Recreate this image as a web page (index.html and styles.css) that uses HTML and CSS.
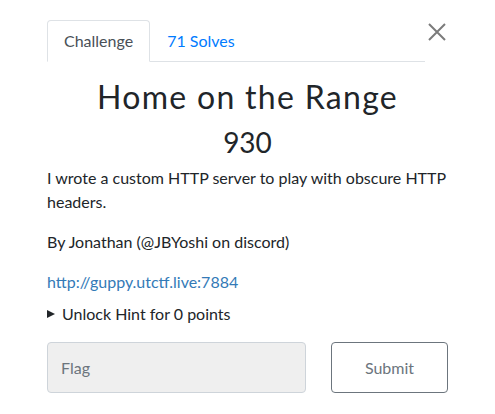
FILE: index.html
```html
<!DOCTYPE html>
<html>
<head>
<meta charset="utf-8">
<link rel="stylesheet" href="styles.css">
</head>
<body>
<div class="modal">
  <div class="header">
    <nav class="tabs">
      <span class="tab active">Challenge</span>
      <span class="tab link">71 Solves</span>
    </nav>
    <button class="close" aria-label="Close">
      <svg width="18" height="18" viewBox="0 0 18 18"><path d="M1 1 L17 17 M17 1 L1 17" stroke="#7b7b7b" stroke-width="2" fill="none"/></svg>
    </button>
  </div>
  <h2 class="title">Home on the Range</h2>
  <h3 class="points">930</h3>
  <div class="desc">
    <p>I wrote a custom HTTP server to play with obscure HTTP headers.</p>
    <p>By Jonathan (@JBYoshi on discord)</p>
    <p><a class="url" href="#">http://guppy.utctf.live:7884</a></p>
  </div>
  <div class="hint"><span class="tri"></span>Unlock Hint for 0 points</div>
  <div class="submit-row">
    <div class="flag">Flag</div>
    <div class="btn">Submit</div>
  </div>
</div>
</body>
</html>
```
FILE: styles.css
```css
* { box-sizing: border-box; }
body {
  margin: 0;
  background: #fff;
  font-family: Lato, "Noto Sans", sans-serif;
  color: #212529;
  font-size: 16px;
  line-height: 24px;
}
.modal {
  width: 495px;
  padding: 20px 47px 0 47px;
}
.header {
  display: flex;
  align-items: flex-start;
}
.tabs {
  width: 378px;
  display: flex;
  border-bottom: 1px solid #dee2e6;
}
.tab {
  padding: 8px 16px;
  margin-bottom: -1px;
  border: 1px solid transparent;
  border-radius: 4px 4px 0 0;
}
.tab.active {
  color: #495057;
  background: #fff;
  border-color: #dee2e6 #dee2e6 #fff;
}
.tab.link {
  color: #007bff;
}
.close {
  margin: 3px 0 0 3px;
  padding: 0;
  border: 0;
  background: none;
  width: 18px;
  height: 18px;
  display: flex;
}
.title {
  margin: 16px 0 0 0;
  text-align: center;
  font-size: 32px;
  line-height: 38px;
  font-weight: 400;
  letter-spacing: 1.3px;
  color: #212529;
}
.points {
  margin: 9px 0 0 0;
  text-align: center;
  font-size: 28px;
  line-height: 34px;
  font-weight: 400;
  color: #212529;
}
.desc {
  margin-top: 7px;
}
.desc p {
  margin: 0 0 16px 0;
}
.desc p:last-child {
  margin-bottom: 8px;
}
.url {
  color: #337ab7;
  text-decoration: none;
}
.hint {
  display: flex;
  align-items: center;
}
.tri {
  width: 0;
  height: 0;
  border-left: 8px solid #212529;
  border-top: 4px solid transparent;
  border-bottom: 4px solid transparent;
  margin-right: 7px;
}
.submit-row {
  display: flex;
  gap: 25px;
  margin-top: 16px;
}
.flag {
  flex: 1;
  height: 51px;
  background: #efefef;
  border: 1px solid #ced4da;
  border-radius: 4px;
  color: #6c757d;
  padding: 12px 13px;
  line-height: 25px;
}
.btn {
  width: 117px;
  height: 51px;
  border: 1px solid #6c757d;
  border-radius: 4px;
  color: #6c757d;
  display: flex;
  align-items: center;
  justify-content: center;
}
```
